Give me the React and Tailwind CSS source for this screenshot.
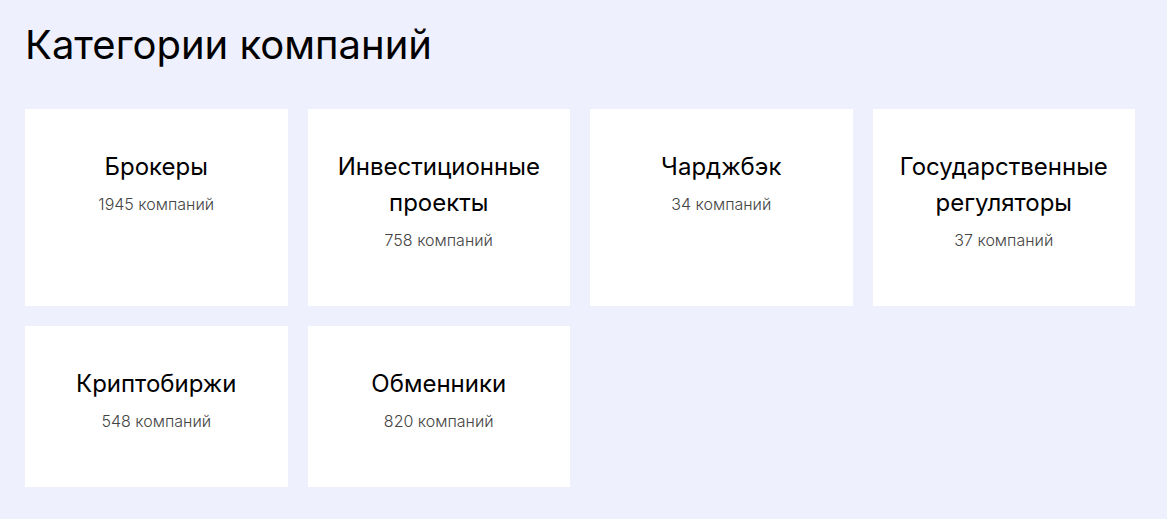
import React from 'react';

const categories = [
  { title: 'Брокеры', count: '1945 компаний' },
  { title: 'Инвестиционные проекты', count: '758 компаний' },
  { title: 'Чарджбэк', count: '34 компаний' },
  { title: 'Государственные регуляторы', count: '37 компаний' },
  { title: 'Криптобиржи', count: '548 компаний' },
  { title: 'Обменники', count: '820 компаний' },
];

export default function App() {
  return (
    <div className="min-h-screen bg-[#eff0fd] pl-[25px] pt-[22px] font-['Inter',sans-serif] text-black">
      <h1 className="text-[40px] leading-[46px] font-normal">Категории компаний</h1>
      <div className="mt-[41px] grid w-[1110px] grid-cols-4 gap-5">
        {categories.map((c) => (
          <a key={c.title} href="#" className="flex flex-col items-center bg-white px-6 pt-10 pb-[54px] text-center">
            <span className="text-2xl leading-9">{c.title}</span>
            <span className="mt-[7px] text-base leading-6 font-light text-[#444]">{c.count}</span>
          </a>
        ))}
      </div>
    </div>
  );
}
